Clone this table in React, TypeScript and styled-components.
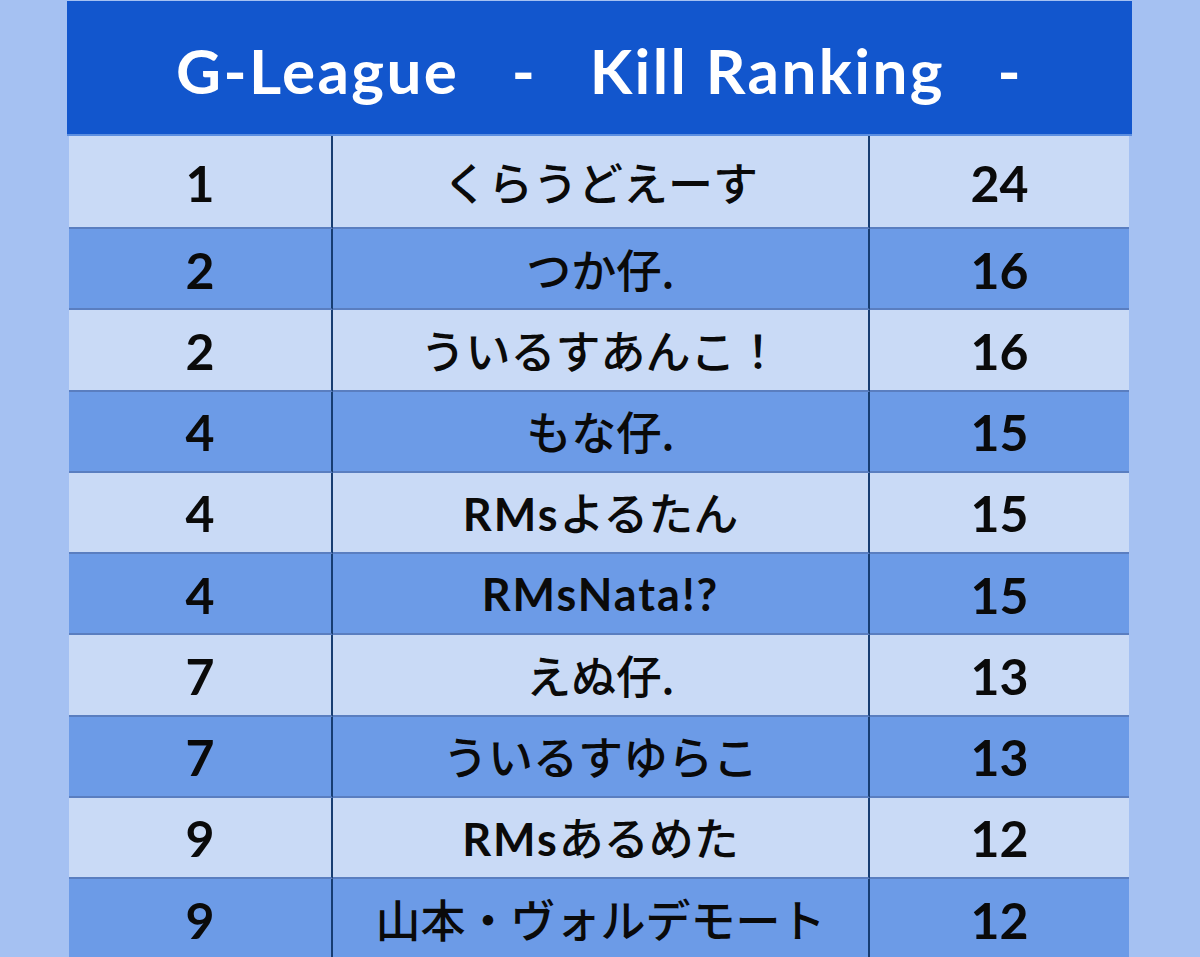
import React from "react";
import styled, { createGlobalStyle } from "styled-components";

const GlobalStyle = createGlobalStyle`
  html, body {
    margin: 0;
    padding: 0;
    background: #a5c1f2;
  }
  body {
    width: 1200px;
    height: 957px;
    overflow: hidden;
    font-family: Lato, "Noto Sans CJK JP", sans-serif;
  }
`;

const Page = styled.div`
  width: 1200px;
  height: 957px;
  background: #a5c1f2;
  padding: 1px 0 0 67px;
  box-sizing: border-box;
`;

const Board = styled.div`
  width: 1065px;
  display: flex;
  flex-direction: column;
`;

const Header = styled.div`
  height: 135px;
  background: #1256cd;
  border-bottom: 2px solid #5d8fe0;
  box-sizing: border-box;
  display: flex;
  align-items: center;
  justify-content: center;
  padding-top: 4px;
`;

const Title = styled.h1`
  margin: 0;
  color: #ffffff;
  font-family: Lato, sans-serif;
  font-weight: 700;
  font-size: 62px;
  letter-spacing: 2.4px;
  white-space: pre;
  line-height: 1;
`;

const Body = styled.div`
  margin: 0 3px 0 2px;
  display: flex;
  flex-direction: column;
`;

const Row = styled.div<{ $dark: boolean; $tall: boolean }>`
  display: grid;
  grid-template-columns: 264px 537px 1fr;
  height: ${(p) => (p.$tall ? 93 : 81.25)}px;
  background: ${(p) => (p.$dark ? "#6c9be7" : "#c9daf6")};
`;

const Cell = styled.div<{ $divider?: boolean }>`
  display: flex;
  align-items: center;
  justify-content: center;
  box-sizing: border-box;
  border-bottom: 2px solid #5a7ec0;
  border-right: ${(p) => (p.$divider ? "2px solid #173d72" : "none")};
  color: #0a0a0a;
  padding-top: 2px;
`;

const Num = styled.span`
  font-family: Lato, sans-serif;
  font-weight: 700;
  font-size: 50px;
  line-height: 1;
`;

const Name = styled.span`
  font-size: 45px;
  line-height: 1;
  white-space: nowrap;
`;

const Latin = styled.span`
  font-family: Lato, sans-serif;
  font-weight: 700;
  letter-spacing: 2px;
`;

const Kana = styled.span`
  font-family: "Noto Sans CJK JP", sans-serif;
  font-weight: 500;
`;

type Seg = { t: string; latin?: boolean };
type Entry = { rank: string; name: Seg[]; kills: string };

const data: Entry[] = [
  { rank: "1", name: [{ t: "くらうどえーす" }], kills: "24" },
  { rank: "2", name: [{ t: "つか仔." }], kills: "16" },
  { rank: "2", name: [{ t: "ういるすあんこ！" }], kills: "16" },
  { rank: "4", name: [{ t: "もな仔." }], kills: "15" },
  { rank: "4", name: [{ t: "RMs", latin: true }, { t: "よるたん" }], kills: "15" },
  { rank: "4", name: [{ t: "RMsNata!?", latin: true }], kills: "15" },
  { rank: "7", name: [{ t: "えぬ仔." }], kills: "13" },
  { rank: "7", name: [{ t: "ういるすゆらこ" }], kills: "13" },
  { rank: "9", name: [{ t: "RMs", latin: true }, { t: "あるめた" }], kills: "12" },
  { rank: "9", name: [{ t: "山本・ヴォルデモート" }], kills: "12" },
];

export default function App() {
  return (
    <>
      <GlobalStyle />
      <Page>
        <Board>
          <Header>
            <Title>{"G-League   -   Kill Ranking   -"}</Title>
          </Header>
          <Body>
            {data.map((e, i) => (
              <Row key={i} $dark={i % 2 === 1} $tall={i === 0}>
                <Cell $divider>
                  <Num>{e.rank}</Num>
                </Cell>
                <Cell $divider>
                  <Name>
                    {e.name.map((s, j) =>
                      s.latin ? <Latin key={j}>{s.t}</Latin> : <Kana key={j}>{s.t}</Kana>
                    )}
                  </Name>
                </Cell>
                <Cell>
                  <Num>{e.kills}</Num>
                </Cell>
              </Row>
            ))}
          </Body>
        </Board>
      </Page>
    </>
  );
}
